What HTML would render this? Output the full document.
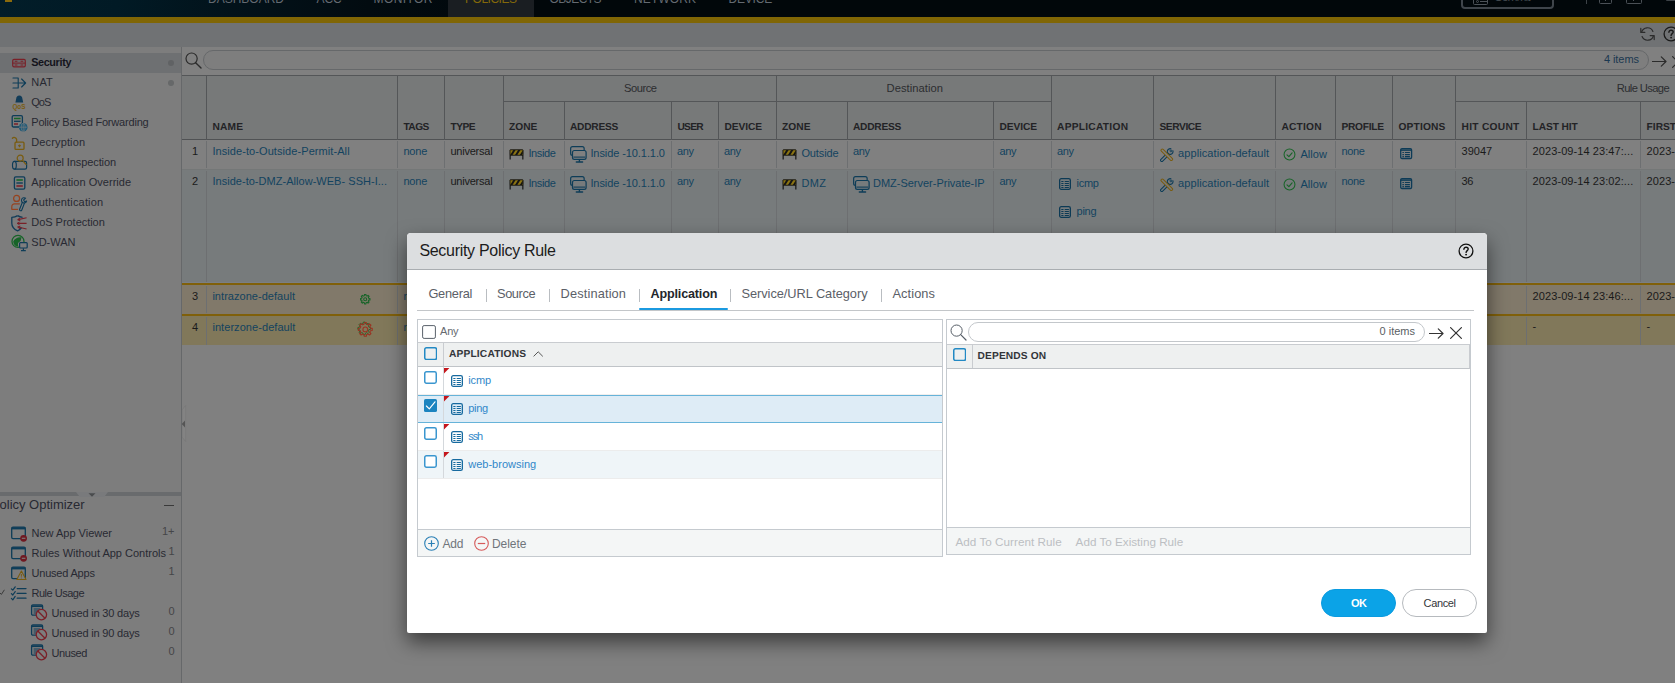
<!DOCTYPE html>
<html><head><meta charset="utf-8"><title>Security Policy Rule</title>
<style>
html,body{margin:0;padding:0}
body{width:1675px;height:683px;overflow:hidden;position:relative;background:#808080;
font-family:"Liberation Sans",sans-serif;}
body div,body svg{position:absolute;box-sizing:border-box}
.t{white-space:nowrap}
</style></head><body>
<div style="left:0px;top:0px;width:1675px;height:17px;background:linear-gradient(100deg,#021d29 0%,#011a25 7%,#02121a 14%,#020b10 22%,#01070a 32%,#01070a 100%);"></div>
<div style="left:448px;top:0px;width:86px;height:17px;background:#1a1e22;"></div>
<div style="left:5px;top:0px;width:7px;height:2px;background:#8a6a0c;"></div>
<div class="t" style="left:208px;top:-9px;font-size:12px;line-height:16px;color:#646a71;letter-spacing:-0.002px;">DASHBOARD</div>
<div class="t" style="left:316.6px;top:-9px;font-size:12px;line-height:16px;color:#646a71;letter-spacing:-0.172px;">ACC</div>
<div class="t" style="left:373.6px;top:-9px;font-size:12px;line-height:16px;color:#646a71;letter-spacing:0.391px;">MONITOR</div>
<div class="t" style="left:465px;top:-9px;font-size:12px;line-height:16px;color:#84690a;letter-spacing:-0.48px;">POLICIES</div>
<div class="t" style="left:549.6px;top:-9px;font-size:12px;line-height:16px;color:#646a71;letter-spacing:-0.557px;">OBJECTS</div>
<div class="t" style="left:634px;top:-9px;font-size:12px;line-height:16px;color:#646a71;letter-spacing:0.109px;">NETWORK</div>
<div class="t" style="left:728.6px;top:-9px;font-size:12px;line-height:16px;color:#646a71;letter-spacing:-0.217px;">DEVICE</div>
<div style="left:1461px;top:-14px;width:93px;height:23px;border:2px solid #3f454b;border-radius:4px"></div>
<div style="left:1473px;top:-6px;width:15px;height:11px;border:1px solid #4c5258;border-radius:1.5px"></div>
<div style="left:1475.6px;top:0.2px;width:3px;height:3px;border:1px solid #4c5258;border-radius:2px"></div>
<div style="left:1479.5px;top:1.2px;width:7.5px;height:1px;background:#4c5258;"></div>
<div class="t" style="left:1494px;top:-11px;font-size:12px;line-height:16px;color:#41474d;letter-spacing:-0.969px;">Commit</div>
<div style="left:1586px;top:-8px;width:1px;height:12px;background:#3c4247;"></div>
<div style="left:1599px;top:-10px;width:13px;height:14px;border:1px solid #4a5056;border-radius:1.5px"></div>
<div style="left:1605px;top:-4px;width:1px;height:5px;background:#4a5056;"></div>
<div style="left:1626px;top:-10px;width:16px;height:14px;border:1px solid #4a5056;border-radius:1.5px"></div>
<div style="left:1633px;top:-4px;width:1px;height:5px;background:#4a5056;"></div>
<div style="left:1666px;top:-4px;width:12px;height:5px;background:#3c4247;border-radius:1px"></div>
<div style="left:0px;top:17px;width:1675px;height:6px;background:#806605;"></div>
<div style="left:0px;top:23px;width:1675px;height:24px;background:#707274;"></div>
<svg style="left:1640px;top:26.8px;" width="15" height="14" viewBox="0 0 15 14" fill="none"><path d="M1.6 5.2A6 6 0 0 1 12.9 4.4M13.4 8.8A6 6 0 0 1 2.1 9.6" stroke="#2b2b2b" stroke-width="1.2" stroke-linecap="round"/><path d="M0.8 1.4V5.4H4.8M14.2 12.6V8.6H10.2" stroke="#2b2b2b" stroke-width="1.2" stroke-linecap="round" stroke-linejoin="round"/></svg>
<svg style="left:1663.2px;top:26px;" width="16" height="16" viewBox="0 0 16 16" fill="none"><circle cx="8" cy="8" r="6.9" stroke="#1a1a1a" stroke-width="1.3"/><path d="M5.9 6.3C5.9 4.9 6.9 4.2 8.1 4.2C9.3 4.2 10.2 5 10.2 6.1C10.2 7.6 8.1 7.7 8.1 9.4" stroke="#1a1a1a" stroke-width="1.4" stroke-linecap="round"/><circle cx="8.1" cy="11.6" r="0.95" fill="#1a1a1a"/></svg>
<div style="left:0px;top:47px;width:181px;height:636px;background:#7d7d7d;"></div>
<div style="left:181px;top:47px;width:1px;height:636px;background:#66686a;"></div>
<div style="left:0px;top:53px;width:181px;height:20px;background:#6e7072;"></div>
<svg style="left:9.600000000000001px;top:53.5px;" width="18" height="18" viewBox="0 0 18 18" fill="none"><rect x="2.7" y="5.4" width="12.6" height="7.4" rx="1.3" fill="#7a2028" fill-opacity=".10" stroke="#7a2028" stroke-width="1.15"/><path d="M2.8 9.1H15.2" stroke="#7a2028" stroke-width="1"/><path d="M4.8 7.25H7.4M10.6 7.25H13.2M4.8 10.95H7.4M10.6 10.95H13.2" stroke="#7a2028" stroke-width="1.1"/></svg>
<div class="t" style="left:31.2px;top:55px;font-size:10.8px;line-height:14px;color:#14141c;font-weight:bold;letter-spacing:-0.344px;">Security</div>
<svg style="left:9.600000000000001px;top:73.5px;" width="18" height="18" viewBox="0 0 18 18" fill="none"><path d="M3 4H8.2V14H3M3 9H15.6M11.6 5L15.6 9L11.6 13" stroke="#0e3d58" stroke-width="1.15" stroke-linecap="round" stroke-linejoin="round"/></svg>
<div class="t" style="left:31.3px;top:75px;font-size:11px;line-height:14px;color:#282932;letter-spacing:0.156px;">NAT</div>
<svg style="left:9.600000000000001px;top:93.5px;" width="18" height="18" viewBox="0 0 18 18" fill="none"><path d="M9.3 1.6C7.4 1.6 6.2 3 6.2 4.8L5.4 8.6H13.2L12.4 4.8C12.4 3 11.2 1.6 9.3 1.6Z" fill="#123c58"/><text x="2.4" y="15.3" font-family="Liberation Sans" font-weight="bold" font-size="6.3" fill="#7a5c10">QoS</text></svg>
<div class="t" style="left:31.3px;top:95px;font-size:11px;line-height:14px;color:#282932;letter-spacing:-1.008px;">QoS</div>
<svg style="left:9.600000000000001px;top:113.5px;" width="18" height="18" viewBox="0 0 18 18" fill="none"><rect x="2.2" y="1.6" width="10.2" height="11.4" rx="1.3" stroke="#0e3d58" stroke-width="1.3"/><path d="M4 4.5H10.6" stroke="#176428" stroke-width="1.5"/><path d="M4 7.3H10.6" stroke="#0e3d58" stroke-width="1.3"/><path d="M4 10H8" stroke="#7a2028" stroke-width="1.5"/><circle cx="13.2" cy="13.2" r="4.3" fill="#1a5878"/><path d="M9 13.2H17.4M13.2 9V17.4" stroke="#7d7d7d" stroke-width="0.7"/><ellipse cx="13.2" cy="13.2" rx="2" ry="4.2" stroke="#7d7d7d" stroke-width="0.6"/></svg>
<div class="t" style="left:31.3px;top:115px;font-size:11px;line-height:14px;color:#282932;letter-spacing:-0.194px;">Policy Based Forwarding</div>
<svg style="left:9.600000000000001px;top:133.5px;" width="18" height="18" viewBox="0 0 18 18" fill="none"><rect x="5" y="8.2" width="9" height="7.2" rx="1" stroke="#7a5c10" stroke-width="1.3"/><path d="M6.6 8V5.4A2.5 2.5 0 0 0 2.4 4.2" stroke="#7a5c10" stroke-width="1.3" stroke-linecap="round"/><path d="M9.5 10.4V13.2M8.2 11.7H10.8" stroke="#7a5c10" stroke-width="1.2"/></svg>
<div class="t" style="left:31.3px;top:135px;font-size:11px;line-height:14px;color:#282932;letter-spacing:0.125px;">Decryption</div>
<svg style="left:9.600000000000001px;top:153.5px;" width="18" height="18" viewBox="0 0 18 18" fill="none"><path d="M4.4 7.4H15A1.6 1.6 0 0 1 16.6 9V13.6A1.6 1.6 0 0 1 15 15.2H4.4" stroke="#0e3d58" stroke-width="1.2"/><ellipse cx="4.4" cy="11.3" rx="1.9" ry="3.9" stroke="#0e3d58" stroke-width="1.2"/><circle cx="10.2" cy="4.2" r="3" stroke="#7a5c10" stroke-width="1.2"/><path d="M12.4 6.4L16 10.4" stroke="#7a5c10" stroke-width="1.3" stroke-linecap="round"/></svg>
<div class="t" style="left:31.3px;top:155px;font-size:11px;line-height:14px;color:#282932;letter-spacing:-0.102px;">Tunnel Inspection</div>
<svg style="left:9.600000000000001px;top:173.5px;" width="18" height="18" viewBox="0 0 18 18" fill="none"><rect x="4.4" y="2.8" width="10.4" height="12.4" rx="1.4" stroke="#0e3d58" stroke-width="1.3"/><path d="M6.4 6H12.8" stroke="#176428" stroke-width="1.6"/><path d="M6.4 9H12.8" stroke="#0e3d58" stroke-width="1.4"/><path d="M6.4 12H12.8" stroke="#7a2028" stroke-width="1.6"/></svg>
<div class="t" style="left:31.3px;top:175px;font-size:11px;line-height:14px;color:#282932;letter-spacing:0.039px;">Application Override</div>
<svg style="left:9.600000000000001px;top:193.5px;" width="18" height="18" viewBox="0 0 18 18" fill="none"><circle cx="6.6" cy="4.4" r="3" stroke="#96431f" stroke-width="1.2"/><path d="M1.8 15.2V12.4A2.6 2.6 0 0 1 4.4 9.8H9.4" stroke="#96431f" stroke-width="1.2" stroke-linecap="round"/><path d="M1.8 15.4H8" stroke="#96431f" stroke-width="1.2"/><path d="M15.6 4.2A2.6 2.6 0 1 0 16.6 7L14.6 7.8L13.6 6Z" stroke="#0e3d58" stroke-width="1.1" stroke-linejoin="round"/><path d="M12.4 8.2L9.6 15.2A1.1 1.1 0 0 0 11.8 16L14.5 9" stroke="#0e3d58" stroke-width="1.1"/></svg>
<div class="t" style="left:31.3px;top:195px;font-size:11px;line-height:14px;color:#282932;letter-spacing:0.16px;">Authentication</div>
<svg style="left:9.600000000000001px;top:213.5px;" width="18" height="18" viewBox="0 0 18 18" fill="none"><path d="M7.6 1.6C5.8 2.8 3.8 3.3 1.8 3.4V9.2C1.8 12.6 4.4 15.4 7.6 16.8C9.3 16 10.6 15 11.6 13.6" stroke="#123c58" stroke-width="1.3" stroke-linejoin="round"/><path d="M7.6 1.6C9.4 2.8 11 3.2 12.6 3.4" stroke="#123c58" stroke-width="1.3"/><path d="M16.6 3.8L8 5.6M16.6 9.4H7.4M16.6 15L8 13" stroke="#7a2028" stroke-width="1.1"/><path d="M10 4L7.6 5.7L10.4 6.8M9.6 8L7.2 9.4L9.6 10.8M10.4 12.2L7.6 13L10 14.8" stroke="#7a2028" stroke-width="1" stroke-linejoin="round"/></svg>
<div class="t" style="left:31.3px;top:215px;font-size:11px;line-height:14px;color:#282932;letter-spacing:-0.037px;">DoS Protection</div>
<svg style="left:9.600000000000001px;top:233.5px;" width="18" height="18" viewBox="0 0 18 18" fill="none"><circle cx="8" cy="7.4" r="6" stroke="#176428" stroke-width="1.3"/><path d="M3.2 7.6C4.6 4.6 8.6 2.6 11.8 3.6C10.4 5 11.6 6.4 10 7.4C8 8 7.4 10 8.4 12.6C5.4 12.8 3.4 10.6 3.2 7.6Z" fill="#176428"/><rect x="9.6" y="8.6" width="7.6" height="5.4" rx="0.9" fill="#7d7d7d" stroke="#0e3d58" stroke-width="1.2"/><path d="M13.4 14.2V16.2M11 16.6H15.8" stroke="#0e3d58" stroke-width="1.2"/></svg>
<div class="t" style="left:31.3px;top:235px;font-size:11px;line-height:14px;color:#282932;letter-spacing:-0.001px;">SD-WAN</div>
<div style="left:168px;top:59.5px;width:6px;height:6px;background:#606264;border-radius:3px"></div>
<div style="left:168px;top:79.5px;width:6px;height:6px;background:#666869;border-radius:3px"></div>
<div style="left:0px;top:492px;width:181px;height:4px;background:#696b6d;"></div>
<div style="left:76px;top:492px;width:32px;height:5px;background:#797a7c;clip-path:polygon(0 0,100% 0,88% 100%,12% 100%)"></div>
<svg style="left:88px;top:492.5px;" width="8" height="4" viewBox="0 0 8 4" fill="none"><path d="M0.5 0.3H7.5L4 3.8Z" fill="#4a4c4e"/></svg>
<div class="t" style="left:-0.4px;top:496px;font-size:13px;line-height:17px;color:#282932;letter-spacing:-0.018px;">olicy Optimizer</div>
<div style="left:164px;top:505px;width:10px;height:1px;background:#3a3a3a;"></div>
<svg style="left:9.3px;top:524px;" width="18" height="18" viewBox="0 0 18 18" fill="none"><rect x="2.7" y="3.2" width="13.6" height="11.4" rx="1.3" stroke="#0e3d58" stroke-width="1.3"/><path d="M2.7 4.3H16.3" stroke="#0e3d58" stroke-width="2.2"/><circle cx="14.6" cy="14.3" r="3.4" fill="#701821"/><path d="M12.8 14.3H16.4" stroke="#7d7d7d" stroke-width="1.1"/></svg>
<div class="t" style="left:31.5px;top:526px;font-size:11px;line-height:14px;color:#282932;letter-spacing:-0.001px;">New App Viewer</div>
<div class="t" style="right:1500.5px;top:524px;font-size:11px;line-height:14px;color:#454548;">1+</div>
<svg style="left:9.3px;top:544px;" width="18" height="18" viewBox="0 0 18 18" fill="none"><rect x="2.7" y="3.2" width="13.6" height="11.4" rx="1.3" stroke="#0e3d58" stroke-width="1.3"/><path d="M2.7 4.3H16.3" stroke="#0e3d58" stroke-width="2.2"/><circle cx="14.6" cy="14.3" r="3.4" fill="#701821"/><path d="M12.8 14.3H16.4" stroke="#7d7d7d" stroke-width="1.1"/></svg>
<div class="t" style="left:31.5px;top:546px;font-size:11px;line-height:14px;color:#282932;letter-spacing:-0.001px;">Rules Without App Controls</div>
<div class="t" style="right:1500.5px;top:544px;font-size:11px;line-height:14px;color:#454548;">1</div>
<svg style="left:9.3px;top:564px;" width="18" height="18" viewBox="0 0 18 18" fill="none"><rect x="2.7" y="3.2" width="13.6" height="11.4" rx="1.3" stroke="#0e3d58" stroke-width="1.3"/><path d="M2.7 4.3H16.3" stroke="#0e3d58" stroke-width="2.2"/><path d="M12.4 7L17 15.5H7.8Z" fill="#7d7d7d" stroke="#7a5c10" stroke-width="1.05" stroke-linejoin="round"/><path d="M12.4 10V12.7M12.4 13.6V14.4" stroke="#7a5c10" stroke-width="0.95"/></svg>
<div class="t" style="left:31.5px;top:566px;font-size:11px;line-height:14px;color:#282932;letter-spacing:-0.204px;">Unused Apps</div>
<div class="t" style="right:1500.5px;top:564px;font-size:11px;line-height:14px;color:#454548;">1</div>
<svg style="left:8.8px;top:584px;" width="18" height="18" viewBox="0 0 18 18" fill="none"><path d="M8.2 4.6H17M8.2 9.4H17M8.2 14.2H17" stroke="#0e3d58" stroke-width="1.3" stroke-linecap="round"/><path d="M2.4 4.8L3.8 6.2L6.2 2.8M2.4 9.6L3.8 11L6.2 7.6M2.4 14.4L3.8 15.8L6.2 12.4" stroke="#0e3d58" stroke-width="1.2" stroke-linecap="round" stroke-linejoin="round"/></svg>
<div class="t" style="left:31.5px;top:586px;font-size:11px;line-height:14px;color:#282932;letter-spacing:-0.498px;">Rule Usage</div>
<svg style="left:30.4px;top:603px;" width="18" height="18" viewBox="0 0 18 18" fill="none"><rect x="1.6" y="1.8" width="11" height="10.4" rx="1.3" stroke="#0e3d58" stroke-width="1.3"/><path d="M1.6 3.2H12.6" stroke="#0e3d58" stroke-width="1.8"/><path d="M3.6 6H10.4M3.6 8H8.2M3.6 10H6.6" stroke="#0e3d58" stroke-width="1"/><circle cx="11.4" cy="11.6" r="5.2" fill="#7d7d7d" stroke="#7a2028" stroke-width="1.3"/><path d="M7.8 8L15 15.2" stroke="#7a2028" stroke-width="1.3"/></svg>
<div class="t" style="left:51.5px;top:606px;font-size:11px;line-height:14px;color:#282932;letter-spacing:-0.177px;">Unused in 30 days</div>
<div class="t" style="right:1500.5px;top:604px;font-size:11px;line-height:14px;color:#454548;">0</div>
<svg style="left:30.4px;top:623px;" width="18" height="18" viewBox="0 0 18 18" fill="none"><rect x="1.6" y="1.8" width="11" height="10.4" rx="1.3" stroke="#0e3d58" stroke-width="1.3"/><path d="M1.6 3.2H12.6" stroke="#0e3d58" stroke-width="1.8"/><path d="M3.6 6H10.4M3.6 8H8.2M3.6 10H6.6" stroke="#0e3d58" stroke-width="1"/><circle cx="11.4" cy="11.6" r="5.2" fill="#7d7d7d" stroke="#7a2028" stroke-width="1.3"/><path d="M7.8 8L15 15.2" stroke="#7a2028" stroke-width="1.3"/></svg>
<div class="t" style="left:51.5px;top:626px;font-size:11px;line-height:14px;color:#282932;letter-spacing:-0.177px;">Unused in 90 days</div>
<div class="t" style="right:1500.5px;top:624px;font-size:11px;line-height:14px;color:#454548;">0</div>
<svg style="left:30.4px;top:643px;" width="18" height="18" viewBox="0 0 18 18" fill="none"><rect x="1.6" y="1.8" width="11" height="10.4" rx="1.3" stroke="#0e3d58" stroke-width="1.3"/><path d="M1.6 3.2H12.6" stroke="#0e3d58" stroke-width="1.8"/><path d="M3.6 6H10.4M3.6 8H8.2M3.6 10H6.6" stroke="#0e3d58" stroke-width="1"/><circle cx="11.4" cy="11.6" r="5.2" fill="#7d7d7d" stroke="#7a2028" stroke-width="1.3"/><path d="M7.8 8L15 15.2" stroke="#7a2028" stroke-width="1.3"/></svg>
<div class="t" style="left:51.5px;top:646px;font-size:11px;line-height:14px;color:#282932;letter-spacing:-0.404px;">Unused</div>
<div class="t" style="right:1500.5px;top:644px;font-size:11px;line-height:14px;color:#454548;">0</div>
<svg style="left:0px;top:588.5px;" width="5" height="6" viewBox="0 0 5 6" fill="none"><path d="M0 4L1.4 5.4L4.4 0.8" stroke="#333" stroke-width="0.9"/></svg>
<svg style="left:185px;top:51.8px;" width="17" height="17" viewBox="0 0 17 17" fill="none"><circle cx="6.6" cy="6.6" r="5.6" stroke="#2b2b2b" stroke-width="1.2"/><path d="M10.7 10.7L16 16" stroke="#2b2b2b" stroke-width="1.4" stroke-linecap="round"/></svg>
<div style="left:203px;top:50px;width:1446px;height:20px;background:#7e7e7e;border:1px solid #66686a;border-radius:10px"></div>
<div class="t" style="left:1603.9px;top:52px;font-size:11px;line-height:14px;color:#1b3850;letter-spacing:-0.061px;">4 items</div>
<svg style="left:1651.5px;top:56px;" width="15" height="11" viewBox="0 0 15 11" fill="none"><path d="M0.5 5.5H14M9.3 0.8L14 5.5L9.3 10.2" stroke="#2b2b2b" stroke-width="1.2" stroke-linecap="round" stroke-linejoin="round"/></svg>
<svg style="left:1671.6px;top:55.6px;" width="12" height="12" viewBox="0 0 12 12" fill="none"><path d="M0.6 0.6L11.4 11.4M11.4 0.6L0.6 11.4" stroke="#2b2b2b" stroke-width="1.2" stroke-linecap="round"/></svg>
<div style="left:182px;top:75px;width:1493px;height:65px;background:#777979;"></div>
<div style="left:182px;top:75px;width:1493px;height:1px;background:#545658;"></div>
<div style="left:182px;top:139px;width:1493px;height:1px;background:#505254;"></div>
<div style="left:206px;top:75px;width:1px;height:65px;background:#545658;"></div>
<div style="left:397px;top:75px;width:1px;height:65px;background:#545658;"></div>
<div style="left:444px;top:75px;width:1px;height:65px;background:#545658;"></div>
<div style="left:503px;top:75px;width:1px;height:65px;background:#545658;"></div>
<div style="left:776px;top:75px;width:1px;height:65px;background:#545658;"></div>
<div style="left:1051px;top:75px;width:1px;height:65px;background:#545658;"></div>
<div style="left:1153px;top:75px;width:1px;height:65px;background:#545658;"></div>
<div style="left:1275px;top:75px;width:1px;height:65px;background:#545658;"></div>
<div style="left:1335px;top:75px;width:1px;height:65px;background:#545658;"></div>
<div style="left:1392px;top:75px;width:1px;height:65px;background:#545658;"></div>
<div style="left:1455px;top:75px;width:1px;height:65px;background:#545658;"></div>
<div style="left:564px;top:101px;width:1px;height:39px;background:#545658;"></div>
<div style="left:671px;top:101px;width:1px;height:39px;background:#545658;"></div>
<div style="left:718px;top:101px;width:1px;height:39px;background:#545658;"></div>
<div style="left:847px;top:101px;width:1px;height:39px;background:#545658;"></div>
<div style="left:993px;top:101px;width:1px;height:39px;background:#545658;"></div>
<div style="left:1526px;top:101px;width:1px;height:39px;background:#545658;"></div>
<div style="left:1640px;top:101px;width:1px;height:39px;background:#545658;"></div>
<div style="left:503px;top:101px;width:273px;height:1px;background:#545658;"></div>
<div style="left:776px;top:101px;width:275px;height:1px;background:#545658;"></div>
<div style="left:1455px;top:101px;width:220px;height:1px;background:#545658;"></div>
<div class="t" style="left:624px;top:81px;font-size:11.2px;line-height:15px;color:#2c2d30;letter-spacing:-0.491px;">Source</div>
<div class="t" style="left:886.6px;top:81px;font-size:11.2px;line-height:15px;color:#2c2d30;letter-spacing:0.042px;">Destination</div>
<div class="t" style="left:1616.7px;top:81px;font-size:11.2px;line-height:15px;color:#2c2d30;letter-spacing:-0.608px;">Rule Usage</div>
<div class="t" style="left:212.4px;top:121px;font-size:10.2px;line-height:13px;color:#232326;font-weight:bold;letter-spacing:0.2px;text-rendering:geometricPrecision;">NAME</div>
<div class="t" style="left:403.4px;top:121px;font-size:10.2px;line-height:13px;color:#232326;font-weight:bold;letter-spacing:-0.516px;text-rendering:geometricPrecision;">TAGS</div>
<div class="t" style="left:450.4px;top:121px;font-size:10.2px;line-height:13px;color:#232326;font-weight:bold;letter-spacing:-0.47px;text-rendering:geometricPrecision;">TYPE</div>
<div class="t" style="left:509px;top:121px;font-size:10.2px;line-height:13px;color:#232326;font-weight:bold;letter-spacing:0.029px;text-rendering:geometricPrecision;">ZONE</div>
<div class="t" style="left:570px;top:121px;font-size:10.2px;line-height:13px;color:#232326;font-weight:bold;letter-spacing:-0.238px;text-rendering:geometricPrecision;">ADDRESS</div>
<div class="t" style="left:677.4px;top:121px;font-size:10.2px;line-height:13px;color:#232326;font-weight:bold;letter-spacing:-0.704px;text-rendering:geometricPrecision;">USER</div>
<div class="t" style="left:724.4px;top:121px;font-size:10.2px;line-height:13px;color:#232326;font-weight:bold;letter-spacing:-0.067px;text-rendering:geometricPrecision;">DEVICE</div>
<div class="t" style="left:782px;top:121px;font-size:10.2px;line-height:13px;color:#232326;font-weight:bold;letter-spacing:0.096px;text-rendering:geometricPrecision;">ZONE</div>
<div class="t" style="left:853px;top:121px;font-size:10.2px;line-height:13px;color:#232326;font-weight:bold;letter-spacing:-0.238px;text-rendering:geometricPrecision;">ADDRESS</div>
<div class="t" style="left:999.4px;top:121px;font-size:10.2px;line-height:13px;color:#232326;font-weight:bold;letter-spacing:-0.067px;text-rendering:geometricPrecision;">DEVICE</div>
<div class="t" style="left:1057px;top:121px;font-size:10.2px;line-height:13px;color:#232326;font-weight:bold;letter-spacing:0.27px;text-rendering:geometricPrecision;">APPLICATION</div>
<div class="t" style="left:1159.4px;top:121px;font-size:10.2px;line-height:13px;color:#232326;font-weight:bold;letter-spacing:-0.391px;text-rendering:geometricPrecision;">SERVICE</div>
<div class="t" style="left:1281.4px;top:121px;font-size:10.2px;line-height:13px;color:#232326;font-weight:bold;letter-spacing:0.228px;text-rendering:geometricPrecision;">ACTION</div>
<div class="t" style="left:1341.4px;top:121px;font-size:10.2px;line-height:13px;color:#232326;font-weight:bold;letter-spacing:-0.259px;text-rendering:geometricPrecision;">PROFILE</div>
<div class="t" style="left:1398.4px;top:121px;font-size:10.2px;line-height:13px;color:#232326;font-weight:bold;letter-spacing:0.19px;text-rendering:geometricPrecision;">OPTIONS</div>
<div class="t" style="left:1461.5px;top:121px;font-size:10.2px;line-height:13px;color:#232326;font-weight:bold;letter-spacing:0.291px;text-rendering:geometricPrecision;">HIT COUNT</div>
<div class="t" style="left:1532.6px;top:121px;font-size:10.2px;line-height:13px;color:#232326;font-weight:bold;letter-spacing:-0.092px;text-rendering:geometricPrecision;">LAST HIT</div>
<div class="t" style="left:1646.6px;top:121px;font-size:10.2px;line-height:13px;color:#232326;font-weight:bold;letter-spacing:0.016px;text-rendering:geometricPrecision;">FIRST</div>
<div style="left:182px;top:169px;width:1493px;height:114px;background:#777b7c;"></div>
<div style="left:182px;top:169px;width:1493px;height:1px;background:#747777;"></div>
<div style="left:182px;top:282px;width:1493px;height:1px;background:#7b7f84;"></div>
<div style="left:182px;top:283px;width:1493px;height:2px;background:#80600a;"></div>
<div style="left:182px;top:285px;width:1493px;height:29px;background:#81796a;"></div>
<div style="left:182px;top:314px;width:1493px;height:2px;background:#80600a;"></div>
<div style="left:182px;top:316px;width:1493px;height:29px;background:#81785a;"></div>
<div style="left:206px;top:141px;width:1px;height:27px;background:#6d6f71;"></div>
<div style="left:206px;top:171px;width:1px;height:111px;background:#6d6f71;"></div>
<div style="left:206px;top:286px;width:1px;height:27px;background:#6d6f71;"></div>
<div style="left:206px;top:317px;width:1px;height:28px;background:#6d6f71;"></div>
<div style="left:397px;top:141px;width:1px;height:27px;background:#6d6f71;"></div>
<div style="left:397px;top:171px;width:1px;height:111px;background:#6d6f71;"></div>
<div style="left:397px;top:286px;width:1px;height:27px;background:#6d6f71;"></div>
<div style="left:397px;top:317px;width:1px;height:28px;background:#6d6f71;"></div>
<div style="left:444px;top:141px;width:1px;height:27px;background:#6d6f71;"></div>
<div style="left:444px;top:171px;width:1px;height:111px;background:#6d6f71;"></div>
<div style="left:444px;top:286px;width:1px;height:27px;background:#6d6f71;"></div>
<div style="left:444px;top:317px;width:1px;height:28px;background:#6d6f71;"></div>
<div style="left:503px;top:141px;width:1px;height:27px;background:#6d6f71;"></div>
<div style="left:503px;top:171px;width:1px;height:111px;background:#6d6f71;"></div>
<div style="left:503px;top:286px;width:1px;height:27px;background:#6d6f71;"></div>
<div style="left:503px;top:317px;width:1px;height:28px;background:#6d6f71;"></div>
<div style="left:776px;top:141px;width:1px;height:27px;background:#6d6f71;"></div>
<div style="left:776px;top:171px;width:1px;height:111px;background:#6d6f71;"></div>
<div style="left:776px;top:286px;width:1px;height:27px;background:#6d6f71;"></div>
<div style="left:776px;top:317px;width:1px;height:28px;background:#6d6f71;"></div>
<div style="left:1051px;top:141px;width:1px;height:27px;background:#6d6f71;"></div>
<div style="left:1051px;top:171px;width:1px;height:111px;background:#6d6f71;"></div>
<div style="left:1051px;top:286px;width:1px;height:27px;background:#6d6f71;"></div>
<div style="left:1051px;top:317px;width:1px;height:28px;background:#6d6f71;"></div>
<div style="left:1153px;top:141px;width:1px;height:27px;background:#6d6f71;"></div>
<div style="left:1153px;top:171px;width:1px;height:111px;background:#6d6f71;"></div>
<div style="left:1153px;top:286px;width:1px;height:27px;background:#6d6f71;"></div>
<div style="left:1153px;top:317px;width:1px;height:28px;background:#6d6f71;"></div>
<div style="left:1275px;top:141px;width:1px;height:27px;background:#6d6f71;"></div>
<div style="left:1275px;top:171px;width:1px;height:111px;background:#6d6f71;"></div>
<div style="left:1275px;top:286px;width:1px;height:27px;background:#6d6f71;"></div>
<div style="left:1275px;top:317px;width:1px;height:28px;background:#6d6f71;"></div>
<div style="left:1335px;top:141px;width:1px;height:27px;background:#6d6f71;"></div>
<div style="left:1335px;top:171px;width:1px;height:111px;background:#6d6f71;"></div>
<div style="left:1335px;top:286px;width:1px;height:27px;background:#6d6f71;"></div>
<div style="left:1335px;top:317px;width:1px;height:28px;background:#6d6f71;"></div>
<div style="left:1392px;top:141px;width:1px;height:27px;background:#6d6f71;"></div>
<div style="left:1392px;top:171px;width:1px;height:111px;background:#6d6f71;"></div>
<div style="left:1392px;top:286px;width:1px;height:27px;background:#6d6f71;"></div>
<div style="left:1392px;top:317px;width:1px;height:28px;background:#6d6f71;"></div>
<div style="left:1455px;top:141px;width:1px;height:27px;background:#6d6f71;"></div>
<div style="left:1455px;top:171px;width:1px;height:111px;background:#6d6f71;"></div>
<div style="left:1455px;top:286px;width:1px;height:27px;background:#6d6f71;"></div>
<div style="left:1455px;top:317px;width:1px;height:28px;background:#6d6f71;"></div>
<div style="left:564px;top:141px;width:1px;height:27px;background:#6d6f71;"></div>
<div style="left:564px;top:171px;width:1px;height:111px;background:#6d6f71;"></div>
<div style="left:564px;top:286px;width:1px;height:27px;background:#6d6f71;"></div>
<div style="left:564px;top:317px;width:1px;height:28px;background:#6d6f71;"></div>
<div style="left:671px;top:141px;width:1px;height:27px;background:#6d6f71;"></div>
<div style="left:671px;top:171px;width:1px;height:111px;background:#6d6f71;"></div>
<div style="left:671px;top:286px;width:1px;height:27px;background:#6d6f71;"></div>
<div style="left:671px;top:317px;width:1px;height:28px;background:#6d6f71;"></div>
<div style="left:718px;top:141px;width:1px;height:27px;background:#6d6f71;"></div>
<div style="left:718px;top:171px;width:1px;height:111px;background:#6d6f71;"></div>
<div style="left:718px;top:286px;width:1px;height:27px;background:#6d6f71;"></div>
<div style="left:718px;top:317px;width:1px;height:28px;background:#6d6f71;"></div>
<div style="left:847px;top:141px;width:1px;height:27px;background:#6d6f71;"></div>
<div style="left:847px;top:171px;width:1px;height:111px;background:#6d6f71;"></div>
<div style="left:847px;top:286px;width:1px;height:27px;background:#6d6f71;"></div>
<div style="left:847px;top:317px;width:1px;height:28px;background:#6d6f71;"></div>
<div style="left:993px;top:141px;width:1px;height:27px;background:#6d6f71;"></div>
<div style="left:993px;top:171px;width:1px;height:111px;background:#6d6f71;"></div>
<div style="left:993px;top:286px;width:1px;height:27px;background:#6d6f71;"></div>
<div style="left:993px;top:317px;width:1px;height:28px;background:#6d6f71;"></div>
<div style="left:1526px;top:141px;width:1px;height:27px;background:#6d6f71;"></div>
<div style="left:1526px;top:171px;width:1px;height:111px;background:#6d6f71;"></div>
<div style="left:1526px;top:286px;width:1px;height:27px;background:#6d6f71;"></div>
<div style="left:1526px;top:317px;width:1px;height:28px;background:#6d6f71;"></div>
<div style="left:1640px;top:141px;width:1px;height:27px;background:#6d6f71;"></div>
<div style="left:1640px;top:171px;width:1px;height:111px;background:#6d6f71;"></div>
<div style="left:1640px;top:286px;width:1px;height:27px;background:#6d6f71;"></div>
<div style="left:1640px;top:317px;width:1px;height:28px;background:#6d6f71;"></div>
<div class="t" style="left:192px;top:144px;font-size:11px;line-height:14px;color:#1a1a1a;">1</div>
<div class="t" style="left:212.4px;top:144px;font-size:11px;line-height:14px;color:#13435f;letter-spacing:0.078px;">Inside-to-Outside-Permit-All</div>
<div class="t" style="left:403.4px;top:144px;font-size:11px;line-height:14px;color:#13435f;letter-spacing:-0.161px;">none</div>
<div class="t" style="left:450.4px;top:144px;font-size:11px;line-height:14px;color:#1a1a1a;letter-spacing:-0.229px;">universal</div>
<svg style="left:509.4px;top:148.6px;" width="15" height="11" viewBox="0 0 15 11" fill="none"><rect x="0.95" y="0.75" width="13.1" height="5.5" rx="0.5" fill="#8a7312" stroke="#121212" stroke-width="0.9"/><path d="M1.2 6L4.3 1H6.6L3.5 6ZM6 6L9.1 1H11.4L8.3 6ZM10.8 6L13.8 1.3V4.6L13 6Z" fill="#141414"/><path d="M1.15 6V10.6M13.85 6V10.6" stroke="#121212" stroke-width="1.15"/></svg>
<div class="t" style="left:528.4px;top:146px;font-size:11px;line-height:14px;color:#13435f;letter-spacing:-0.352px;">Inside</div>
<div class="t" style="left:590.4px;top:146px;font-size:11px;line-height:14px;color:#13435f;letter-spacing:-0.083px;">Inside -10.1.1.0</div>
<div class="t" style="left:677px;top:144px;font-size:11px;line-height:14px;color:#13435f;letter-spacing:-0.375px;">any</div>
<div class="t" style="left:724px;top:144px;font-size:11px;line-height:14px;color:#13435f;letter-spacing:-0.375px;">any</div>
<svg style="left:782.4px;top:148.6px;" width="15" height="11" viewBox="0 0 15 11" fill="none"><rect x="0.95" y="0.75" width="13.1" height="5.5" rx="0.5" fill="#8a7312" stroke="#121212" stroke-width="0.9"/><path d="M1.2 6L4.3 1H6.6L3.5 6ZM6 6L9.1 1H11.4L8.3 6ZM10.8 6L13.8 1.3V4.6L13 6Z" fill="#141414"/><path d="M1.15 6V10.6M13.85 6V10.6" stroke="#121212" stroke-width="1.15"/></svg>
<div class="t" style="left:999.4px;top:144px;font-size:11px;line-height:14px;color:#13435f;letter-spacing:-0.375px;">any</div>
<svg style="left:1159.7px;top:147.7px;" width="14" height="14" viewBox="0 0 14 14" fill="none"><rect x="-5.3" y="-1.25" width="10.6" height="2.5" rx="0.9" transform="translate(4.7 9.3) rotate(-45)" stroke="#0e3d58" stroke-width="1.05"/><path d="M12.9 2.7A2.85 2.85 0 1 1 10.9 0.75" stroke="#0e3d58" stroke-width="1.1" stroke-linecap="round"/><circle cx="10.9" cy="2.9" r="0.95" stroke="#0e3d58" stroke-width="0.9"/><rect x="-7.6" y="-1.3" width="15.2" height="2.6" rx="1.2" transform="translate(6.8 6.8) rotate(45)" fill="#808080" stroke="#7a5c10" stroke-width="1.05"/></svg>
<div class="t" style="left:1178px;top:146px;font-size:11px;line-height:14px;color:#13435f;letter-spacing:0.095px;">application-default</div>
<svg style="left:1283px;top:147.79999999999998px;" width="13" height="13" viewBox="0 0 13 13" fill="none"><circle cx="6.5" cy="6.5" r="5.45" stroke="#176428" stroke-width="1.05"/><path d="M4 6.8L5.9 8.6L9.1 4.8" stroke="#176428" stroke-width="1.1" stroke-linecap="round" stroke-linejoin="round"/></svg>
<div class="t" style="left:1300.4px;top:147px;font-size:11px;line-height:14px;color:#13435f;letter-spacing:0.076px;">Allow</div>
<div class="t" style="left:1341.4px;top:144px;font-size:11px;line-height:14px;color:#13435f;letter-spacing:-0.295px;">none</div>
<svg style="left:1399.8px;top:148.2px;" width="13" height="12" viewBox="0 0 13 12" fill="none"><rect x="0.7" y="0.7" width="10.9" height="9.8" rx="1.3" stroke="#0d3b57" stroke-width="1.3"/><path d="M0.7 2.1H11.6" stroke="#0d3b57" stroke-width="1.5"/><path d="M2.4 4.5H3.9M4.9 4.5H9.9M2.4 6.6H3.9M4.9 6.6H9.9M2.4 8.7H3.9M4.9 8.7H9.9" stroke="#0d3b57" stroke-width="1.2"/></svg>
<svg style="left:569.6px;top:146px;" width="17" height="17" viewBox="0 0 17 17" fill="none"><rect x="0.65" y="0.65" width="13.5" height="8.7" rx="1.9" stroke="#0e3d58" stroke-width="1.2"/><rect x="2.5" y="4.5" width="13.6" height="8.9" rx="1.9" fill="#808080" stroke="#0e3d58" stroke-width="1.2"/><path d="M3.4 11.1H15.2" stroke="#0e3d58" stroke-width="1.1"/><path d="M9.4 13.6V15.6M6.3 16H12.6" stroke="#0e3d58" stroke-width="1.35" stroke-linecap="round"/></svg>
<div class="t" style="left:801.4px;top:146px;font-size:11px;line-height:14px;color:#13435f;letter-spacing:-0.12px;">Outside</div>
<div class="t" style="left:853px;top:144px;font-size:11px;line-height:14px;color:#13435f;letter-spacing:-0.375px;">any</div>
<div class="t" style="left:1057px;top:144px;font-size:11px;line-height:14px;color:#13435f;letter-spacing:-0.375px;">any</div>
<div class="t" style="left:1461.5px;top:144px;font-size:11px;line-height:14px;color:#1a1a1a;letter-spacing:0.027px;">39047</div>
<div class="t" style="left:1532.6px;top:144px;font-size:11px;line-height:14px;color:#1a1a1a;letter-spacing:0.08px;">2023-09-14 23:47:...</div>
<div class="t" style="left:1646.6px;top:144px;font-size:11px;line-height:14px;color:#1a1a1a;letter-spacing:0.065px;">2023-</div>
<div class="t" style="left:192px;top:174px;font-size:11px;line-height:14px;color:#1a1a1a;">2</div>
<div class="t" style="left:212.4px;top:174px;font-size:11px;line-height:14px;color:#13435f;letter-spacing:0.032px;">Inside-to-DMZ-Allow-WEB- SSH-I...</div>
<div class="t" style="left:403.4px;top:174px;font-size:11px;line-height:14px;color:#13435f;letter-spacing:-0.161px;">none</div>
<div class="t" style="left:450.4px;top:174px;font-size:11px;line-height:14px;color:#1a1a1a;letter-spacing:-0.229px;">universal</div>
<svg style="left:509.4px;top:178.6px;" width="15" height="11" viewBox="0 0 15 11" fill="none"><rect x="0.95" y="0.75" width="13.1" height="5.5" rx="0.5" fill="#8a7312" stroke="#121212" stroke-width="0.9"/><path d="M1.2 6L4.3 1H6.6L3.5 6ZM6 6L9.1 1H11.4L8.3 6ZM10.8 6L13.8 1.3V4.6L13 6Z" fill="#141414"/><path d="M1.15 6V10.6M13.85 6V10.6" stroke="#121212" stroke-width="1.15"/></svg>
<div class="t" style="left:528.4px;top:176px;font-size:11px;line-height:14px;color:#13435f;letter-spacing:-0.352px;">Inside</div>
<div class="t" style="left:590.4px;top:176px;font-size:11px;line-height:14px;color:#13435f;letter-spacing:-0.083px;">Inside -10.1.1.0</div>
<div class="t" style="left:677px;top:174px;font-size:11px;line-height:14px;color:#13435f;letter-spacing:-0.375px;">any</div>
<div class="t" style="left:724px;top:174px;font-size:11px;line-height:14px;color:#13435f;letter-spacing:-0.375px;">any</div>
<svg style="left:782.4px;top:178.6px;" width="15" height="11" viewBox="0 0 15 11" fill="none"><rect x="0.95" y="0.75" width="13.1" height="5.5" rx="0.5" fill="#8a7312" stroke="#121212" stroke-width="0.9"/><path d="M1.2 6L4.3 1H6.6L3.5 6ZM6 6L9.1 1H11.4L8.3 6ZM10.8 6L13.8 1.3V4.6L13 6Z" fill="#141414"/><path d="M1.15 6V10.6M13.85 6V10.6" stroke="#121212" stroke-width="1.15"/></svg>
<div class="t" style="left:999.4px;top:174px;font-size:11px;line-height:14px;color:#13435f;letter-spacing:-0.375px;">any</div>
<svg style="left:1159.7px;top:177.7px;" width="14" height="14" viewBox="0 0 14 14" fill="none"><rect x="-5.3" y="-1.25" width="10.6" height="2.5" rx="0.9" transform="translate(4.7 9.3) rotate(-45)" stroke="#0e3d58" stroke-width="1.05"/><path d="M12.9 2.7A2.85 2.85 0 1 1 10.9 0.75" stroke="#0e3d58" stroke-width="1.1" stroke-linecap="round"/><circle cx="10.9" cy="2.9" r="0.95" stroke="#0e3d58" stroke-width="0.9"/><rect x="-7.6" y="-1.3" width="15.2" height="2.6" rx="1.2" transform="translate(6.8 6.8) rotate(45)" fill="#777b7c" stroke="#7a5c10" stroke-width="1.05"/></svg>
<div class="t" style="left:1178px;top:176px;font-size:11px;line-height:14px;color:#13435f;letter-spacing:0.095px;">application-default</div>
<svg style="left:1283px;top:177.79999999999998px;" width="13" height="13" viewBox="0 0 13 13" fill="none"><circle cx="6.5" cy="6.5" r="5.45" stroke="#176428" stroke-width="1.05"/><path d="M4 6.8L5.9 8.6L9.1 4.8" stroke="#176428" stroke-width="1.1" stroke-linecap="round" stroke-linejoin="round"/></svg>
<div class="t" style="left:1300.4px;top:177px;font-size:11px;line-height:14px;color:#13435f;letter-spacing:0.076px;">Allow</div>
<div class="t" style="left:1341.4px;top:174px;font-size:11px;line-height:14px;color:#13435f;letter-spacing:-0.295px;">none</div>
<svg style="left:1399.8px;top:178.2px;" width="13" height="12" viewBox="0 0 13 12" fill="none"><rect x="0.7" y="0.7" width="10.9" height="9.8" rx="1.3" stroke="#0d3b57" stroke-width="1.3"/><path d="M0.7 2.1H11.6" stroke="#0d3b57" stroke-width="1.5"/><path d="M2.4 4.5H3.9M4.9 4.5H9.9M2.4 6.6H3.9M4.9 6.6H9.9M2.4 8.7H3.9M4.9 8.7H9.9" stroke="#0d3b57" stroke-width="1.2"/></svg>
<svg style="left:569.6px;top:176px;" width="17" height="17" viewBox="0 0 17 17" fill="none"><rect x="0.65" y="0.65" width="13.5" height="8.7" rx="1.9" stroke="#0e3d58" stroke-width="1.2"/><rect x="2.5" y="4.5" width="13.6" height="8.9" rx="1.9" fill="#777b7c" stroke="#0e3d58" stroke-width="1.2"/><path d="M3.4 11.1H15.2" stroke="#0e3d58" stroke-width="1.1"/><path d="M9.4 13.6V15.6M6.3 16H12.6" stroke="#0e3d58" stroke-width="1.35" stroke-linecap="round"/></svg>
<div class="t" style="left:801.4px;top:176px;font-size:11px;line-height:14px;color:#13435f;letter-spacing:0.386px;">DMZ</div>
<svg style="left:852.6px;top:176px;" width="17" height="17" viewBox="0 0 17 17" fill="none"><rect x="0.65" y="0.65" width="13.5" height="8.7" rx="1.9" stroke="#0e3d58" stroke-width="1.2"/><rect x="2.5" y="4.5" width="13.6" height="8.9" rx="1.9" fill="#777b7c" stroke="#0e3d58" stroke-width="1.2"/><path d="M3.4 11.1H15.2" stroke="#0e3d58" stroke-width="1.1"/><path d="M9.4 13.6V15.6M6.3 16H12.6" stroke="#0e3d58" stroke-width="1.35" stroke-linecap="round"/></svg>
<div class="t" style="left:873px;top:176px;font-size:11px;line-height:14px;color:#13435f;letter-spacing:-0.012px;">DMZ-Server-Private-IP</div>
<svg style="left:1059px;top:178px;" width="13" height="13" viewBox="0 0 13 13" fill="none"><rect x="0.65" y="0.65" width="10.7" height="10.7" rx="1.6" stroke="#0c3a55" stroke-width="1.3"/><path d="M2.3 3.5H4.5M5.7 3.5H9.9M2.3 5.5H4.5M5.7 5.5H9.9M2.3 7.5H4.5M5.7 7.5H9.9M2.3 9.5H4.5M5.7 9.5H9.9" stroke="#0c3a55" stroke-width="1"/></svg>
<div class="t" style="left:1076.6px;top:176px;font-size:11px;line-height:14px;color:#13435f;letter-spacing:-0.278px;">icmp</div>
<svg style="left:1059px;top:206px;" width="13" height="13" viewBox="0 0 13 13" fill="none"><rect x="0.65" y="0.65" width="10.7" height="10.7" rx="1.6" stroke="#0c3a55" stroke-width="1.3"/><path d="M2.3 3.5H4.5M5.7 3.5H9.9M2.3 5.5H4.5M5.7 5.5H9.9M2.3 7.5H4.5M5.7 7.5H9.9M2.3 9.5H4.5M5.7 9.5H9.9" stroke="#0c3a55" stroke-width="1"/></svg>
<div class="t" style="left:1076.6px;top:204px;font-size:11px;line-height:14px;color:#13435f;letter-spacing:-0.266px;">ping</div>
<div class="t" style="left:1461.5px;top:174px;font-size:11px;line-height:14px;color:#1a1a1a;letter-spacing:-0.25px;">36</div>
<div class="t" style="left:1532.6px;top:174px;font-size:11px;line-height:14px;color:#1a1a1a;letter-spacing:0.08px;">2023-09-14 23:02:...</div>
<div class="t" style="left:1646.6px;top:174px;font-size:11px;line-height:14px;color:#1a1a1a;letter-spacing:0.065px;">2023-</div>
<div class="t" style="left:192px;top:289px;font-size:11px;line-height:14px;color:#1a1a1a;">3</div>
<div class="t" style="left:212.4px;top:289px;font-size:11px;line-height:14px;color:#13435f;letter-spacing:0.04px;">intrazone-default</div>
<svg style="left:359.6px;top:293.6px;" width="11" height="11" viewBox="0 0 11 11" fill="none"><path d="M9.95 4.49L9.95 5.91L8.69 6.08L8.29 7.04L9.06 8.05L8.05 9.06L7.04 8.29L6.08 8.69L5.91 9.95L4.49 9.95L4.32 8.69L3.36 8.29L2.35 9.06L1.34 8.05L2.11 7.04L1.71 6.08L0.45 5.91L0.45 4.49L1.71 4.32L2.11 3.36L1.34 2.35L2.35 1.34L3.36 2.11L4.32 1.71L4.49 0.45L5.91 0.45L6.08 1.71L7.04 2.11L8.05 1.34L9.06 2.35L8.29 3.36L8.69 4.32Z" stroke="#176428" stroke-width="1.1" stroke-linejoin="round"/><circle cx="5.2" cy="5.2" r="1.5" stroke="#176428" stroke-width="1.1"/></svg>
<div class="t" style="left:403.4px;top:289px;font-size:11px;line-height:14px;color:#13435f;letter-spacing:-0.161px;">none</div>
<div class="t" style="left:1532.6px;top:289px;font-size:11px;line-height:14px;color:#1a1a1a;letter-spacing:0.08px;">2023-09-14 23:46:...</div>
<div class="t" style="left:1646.6px;top:289px;font-size:11px;line-height:14px;color:#1a1a1a;letter-spacing:0.065px;">2023-</div>
<div class="t" style="left:192px;top:320px;font-size:11px;line-height:14px;color:#1a1a1a;">4</div>
<div class="t" style="left:212.4px;top:320px;font-size:11px;line-height:14px;color:#13435f;letter-spacing:0.065px;">interzone-default</div>
<svg style="left:356.6px;top:321.4px;" width="16" height="16" viewBox="0 0 16 16" fill="none"><path d="M13.53 6.45L13.53 8.35L11.95 8.60L11.41 9.91L12.35 11.21L11.01 12.55L9.71 11.61L8.40 12.15L8.15 13.73L6.25 13.73L6.00 12.15L4.69 11.61L3.39 12.55L2.05 11.21L2.99 9.91L2.45 8.60L0.87 8.35L0.87 6.45L2.45 6.20L2.99 4.89L2.05 3.59L3.39 2.25L4.69 3.19L6.00 2.65L6.25 1.07L8.15 1.07L8.40 2.65L9.71 3.19L11.01 2.25L12.35 3.59L11.41 4.89L11.95 6.20Z" stroke="#176428" stroke-width="0.9" stroke-linejoin="round" opacity="0.9"/><path d="M15.22 7.36L15.22 9.44L13.44 9.70L12.85 11.12L13.93 12.56L12.46 14.03L11.02 12.95L9.60 13.54L9.34 15.32L7.26 15.32L7.00 13.54L5.58 12.95L4.14 14.03L2.67 12.56L3.75 11.12L3.16 9.70L1.38 9.44L1.38 7.36L3.16 7.10L3.75 5.68L2.67 4.24L4.14 2.77L5.58 3.85L7.00 3.26L7.26 1.48L9.34 1.48L9.60 3.26L11.02 3.85L12.46 2.77L13.93 4.24L12.85 5.68L13.44 7.10Z" stroke="#9a3322" stroke-width="1.1" stroke-linejoin="round"/><circle cx="8.3" cy="8.4" r="2.4" stroke="#9a3322" stroke-width="1.1"/></svg>
<div class="t" style="left:403.4px;top:320px;font-size:11px;line-height:14px;color:#13435f;letter-spacing:-0.161px;">none</div>
<div class="t" style="left:1532.6px;top:319px;font-size:11px;line-height:14px;color:#1a1a1a;">-</div>
<div class="t" style="left:1646.6px;top:319px;font-size:11px;line-height:14px;color:#1a1a1a;">-</div>
<svg style="left:182px;top:405px;" width="5" height="37" viewBox="0 0 5 37" fill="none"><path d="M0 5L3.6 0.5V36.5L0 32Z" fill="#838383" stroke="#797979" stroke-width="0.8"/></svg>
<svg style="left:181px;top:419.5px;" width="5" height="8" viewBox="0 0 5 8" fill="none"><path d="M4 0.5L0.8 4L4 7.5Z" fill="#555"/></svg>
<div style="left:407px;top:233px;width:1080px;height:399.5px;background:#fff;border-radius:4px 4px 2px 2px;box-shadow:0 9px 20px rgba(0,0,0,.54)"></div>
<div style="left:407px;top:233px;width:1080px;height:36px;background:#dcdee0;border-radius:4px 4px 0 0"></div>
<div style="left:407px;top:269px;width:1080px;height:1px;background:#a9adb1;"></div>
<div class="t" style="left:419.4px;top:240px;font-size:16px;line-height:21px;color:#1b1b1b;letter-spacing:-0.299px;">Security Policy Rule</div>
<svg style="left:1457.6px;top:243.4px;" width="16" height="16" viewBox="0 0 16 16" fill="none"><circle cx="8" cy="8" r="6.9" stroke="#111" stroke-width="1.3"/><path d="M5.9 6.3C5.9 4.9 6.9 4.2 8.1 4.2C9.3 4.2 10.2 5 10.2 6.1C10.2 7.6 8.1 7.7 8.1 9.4" stroke="#111" stroke-width="1.4" stroke-linecap="round"/><circle cx="8.1" cy="11.6" r="0.95" fill="#111"/></svg>
<div class="t" style="left:428.4px;top:285px;font-size:12.8px;line-height:17px;color:#5b6067;letter-spacing:-0.255px;">General</div>
<div class="t" style="left:497px;top:285px;font-size:12.8px;line-height:17px;color:#5b6067;letter-spacing:-0.389px;">Source</div>
<div class="t" style="left:560.6px;top:285px;font-size:12.8px;line-height:17px;color:#5b6067;letter-spacing:0.137px;">Destination</div>
<div class="t" style="left:741.4px;top:285px;font-size:12.8px;line-height:17px;color:#5b6067;letter-spacing:-0.034px;">Service/URL Category</div>
<div class="t" style="left:892.4px;top:285px;font-size:12.8px;line-height:17px;color:#5b6067;letter-spacing:0.105px;">Actions</div>
<div class="t" style="left:650.6px;top:286px;font-size:12.6px;line-height:16px;color:#23262b;font-weight:bold;letter-spacing:-0.178px;">Application</div>
<div style="left:486px;top:289px;width:1px;height:13px;background:#b9bdc1;"></div>
<div style="left:549px;top:289px;width:1px;height:13px;background:#b9bdc1;"></div>
<div style="left:639px;top:289px;width:1px;height:13px;background:#b9bdc1;"></div>
<div style="left:730px;top:289px;width:1px;height:13px;background:#b9bdc1;"></div>
<div style="left:881px;top:289px;width:1px;height:13px;background:#b9bdc1;"></div>
<div style="left:417px;top:310px;width:1057px;height:1px;background:#c3c6c9;"></div>
<div style="left:639.4px;top:307.6px;width:88.2px;height:2.5px;background:#1b9ae0;border-radius:1px"></div>
<div style="left:417px;top:319px;width:526px;height:238px;background:#fff;border:1px solid #c5cacf"></div>
<svg style="left:421.8px;top:324.8px;" width="14" height="14" viewBox="0 0 14 14" fill="none"><rect x="0.6" y="0.6" width="12.8" height="12.8" rx="1.5" fill="#fff" stroke="#59616a" stroke-width="1"/></svg>
<div class="t" style="left:440px;top:324px;font-size:11px;line-height:14px;color:#666a70;letter-spacing:-0.184px;">Any</div>
<div style="left:418px;top:342px;width:524px;height:25px;background:#eef0f0;border-top:1px solid #c9ccd0;border-bottom:1px solid #c0c4c8"></div>
<div style="left:443px;top:343px;width:1px;height:23px;background:#c9ccd0;"></div>
<svg style="left:424.1px;top:346.5px;" width="13.3" height="13.3" viewBox="0 0 13.3 13.3" fill="none"><rect x="0.75" y="0.75" width="11.8" height="11.8" rx="1.7" fill="#eef0f0" stroke="#2289c4" stroke-width="1.5"/></svg>
<div class="t" style="left:449px;top:348px;font-size:10.2px;line-height:13px;color:#33353a;font-weight:bold;letter-spacing:0.173px;text-rendering:geometricPrecision;">APPLICATIONS</div>
<svg style="left:533.4px;top:350.6px;" width="11" height="6" viewBox="0 0 11 6" fill="none"><path d="M0.6 5.4L5.2 0.8L9.8 5.4" stroke="#555" stroke-width="1"/></svg>
<div style="left:418px;top:367px;width:524px;height:28px;background:#fff;"></div>
<div style="left:443px;top:367px;width:1px;height:28px;background:#d4d8dc;"></div>
<svg style="left:424.1px;top:371.1px;" width="13" height="13" viewBox="0 0 13 13" fill="none"><rect x="0.75" y="0.75" width="11.5" height="11.5" rx="1.7" fill="#fff" stroke="#3a96cf" stroke-width="1.5"/></svg>
<svg style="left:444px;top:368px;" width="6" height="6" viewBox="0 0 6 6" fill="none"><path d="M0 0H5.4L0 5.6Z" fill="#c4161c"/></svg>
<svg style="left:451px;top:375px;" width="13" height="13" viewBox="0 0 13 13" fill="none"><rect x="0.65" y="0.65" width="10.7" height="10.7" rx="1.6" stroke="#176a9f" stroke-width="1.3"/><path d="M2.3 3.5H4.5M5.7 3.5H9.9M2.3 5.5H4.5M5.7 5.5H9.9M2.3 7.5H4.5M5.7 7.5H9.9M2.3 9.5H4.5M5.7 9.5H9.9" stroke="#176a9f" stroke-width="1"/></svg>
<div class="t" style="left:468.2px;top:373px;font-size:11px;line-height:14px;color:#3187c9;letter-spacing:-0.078px;">icmp</div>
<div style="left:418px;top:395px;width:524px;height:28px;background:#deecf6;"></div>
<div style="left:443px;top:395px;width:1px;height:28px;background:#d4d8dc;"></div>
<svg style="left:424.1px;top:399.1px;" width="13" height="13" viewBox="0 0 13 13" fill="none"><rect x="0" y="0" width="13" height="13" rx="1.6" fill="#1b84c0"/><path d="M2.4 7L5.3 9.8L11 2.8" stroke="#fff" stroke-width="1.15" stroke-linecap="round" stroke-linejoin="round"/></svg>
<svg style="left:444px;top:396px;" width="6" height="6" viewBox="0 0 6 6" fill="none"><path d="M0 0H5.4L0 5.6Z" fill="#c4161c"/></svg>
<svg style="left:451px;top:403px;" width="13" height="13" viewBox="0 0 13 13" fill="none"><rect x="0.65" y="0.65" width="10.7" height="10.7" rx="1.6" stroke="#176a9f" stroke-width="1.3"/><path d="M2.3 3.5H4.5M5.7 3.5H9.9M2.3 5.5H4.5M5.7 5.5H9.9M2.3 7.5H4.5M5.7 7.5H9.9M2.3 9.5H4.5M5.7 9.5H9.9" stroke="#176a9f" stroke-width="1"/></svg>
<div class="t" style="left:468.2px;top:401px;font-size:11px;line-height:14px;color:#3187c9;letter-spacing:-0.266px;">ping</div>
<div style="left:418px;top:423px;width:524px;height:28px;background:#fff;"></div>
<div style="left:443px;top:423px;width:1px;height:28px;background:#d4d8dc;"></div>
<svg style="left:424.1px;top:427.1px;" width="13" height="13" viewBox="0 0 13 13" fill="none"><rect x="0.75" y="0.75" width="11.5" height="11.5" rx="1.7" fill="#fff" stroke="#3a96cf" stroke-width="1.5"/></svg>
<svg style="left:444px;top:424px;" width="6" height="6" viewBox="0 0 6 6" fill="none"><path d="M0 0H5.4L0 5.6Z" fill="#c4161c"/></svg>
<svg style="left:451px;top:431px;" width="13" height="13" viewBox="0 0 13 13" fill="none"><rect x="0.65" y="0.65" width="10.7" height="10.7" rx="1.6" stroke="#176a9f" stroke-width="1.3"/><path d="M2.3 3.5H4.5M5.7 3.5H9.9M2.3 5.5H4.5M5.7 5.5H9.9M2.3 7.5H4.5M5.7 7.5H9.9M2.3 9.5H4.5M5.7 9.5H9.9" stroke="#176a9f" stroke-width="1"/></svg>
<div class="t" style="left:468.2px;top:429px;font-size:11px;line-height:14px;color:#3187c9;letter-spacing:-1.062px;">ssh</div>
<div style="left:418px;top:451px;width:524px;height:28px;background:#eff5f8;"></div>
<div style="left:443px;top:451px;width:1px;height:28px;background:#d4d8dc;"></div>
<svg style="left:424.1px;top:455.1px;" width="13" height="13" viewBox="0 0 13 13" fill="none"><rect x="0.75" y="0.75" width="11.5" height="11.5" rx="1.7" fill="#fff" stroke="#3a96cf" stroke-width="1.5"/></svg>
<svg style="left:444px;top:452px;" width="6" height="6" viewBox="0 0 6 6" fill="none"><path d="M0 0H5.4L0 5.6Z" fill="#c4161c"/></svg>
<svg style="left:451px;top:459px;" width="13" height="13" viewBox="0 0 13 13" fill="none"><rect x="0.65" y="0.65" width="10.7" height="10.7" rx="1.6" stroke="#176a9f" stroke-width="1.3"/><path d="M2.3 3.5H4.5M5.7 3.5H9.9M2.3 5.5H4.5M5.7 5.5H9.9M2.3 7.5H4.5M5.7 7.5H9.9M2.3 9.5H4.5M5.7 9.5H9.9" stroke="#176a9f" stroke-width="1"/></svg>
<div class="t" style="left:468.2px;top:457px;font-size:11px;line-height:14px;color:#3187c9;letter-spacing:0.011px;">web-browsing</div>
<div style="left:418px;top:394px;width:524px;height:1px;background:#f1efee;"></div>
<div style="left:418px;top:450px;width:524px;height:1px;background:#ececec;"></div>
<div style="left:418px;top:395px;width:524px;height:1px;background:#66b3d9;"></div>
<div style="left:418px;top:422px;width:524px;height:1px;background:#66b3d9;"></div>
<div style="left:418px;top:478px;width:524px;height:1px;background:#ececec;"></div>
<div style="left:418px;top:529px;width:524px;height:27px;background:#f4f6f6;border-top:1px solid #c5cacf"></div>
<svg style="left:424px;top:536px;" width="15" height="15" viewBox="0 0 15 15" fill="none"><circle cx="7.5" cy="7.5" r="6.8" stroke="#2a7fb5" stroke-width="1.1"/><path d="M4.2 7.5H10.8M7.5 4.2V10.8" stroke="#2a7fb5" stroke-width="1.2"/></svg>
<div class="t" style="left:442.4px;top:536px;font-size:12px;line-height:16px;color:#70757b;letter-spacing:-0.18px;">Add</div>
<svg style="left:474px;top:536px;" width="15" height="15" viewBox="0 0 15 15" fill="none"><circle cx="7.5" cy="7.5" r="6.8" stroke="#d65a5a" stroke-width="1.1"/><path d="M3.8 7.5H11.2" stroke="#d65a5a" stroke-width="1.2"/></svg>
<div class="t" style="left:492px;top:536px;font-size:12px;line-height:16px;color:#70757b;letter-spacing:-0.058px;">Delete</div>
<div style="left:946px;top:319px;width:525px;height:236px;background:#fff;border:1px solid #c5cacf"></div>
<svg style="left:950px;top:323.8px;" width="17" height="17" viewBox="0 0 17 17" fill="none"><circle cx="6.6" cy="6.6" r="5.6" stroke="#565e67" stroke-width="1"/><path d="M10.7 10.7L16 16" stroke="#565e67" stroke-width="1.2" stroke-linecap="round"/></svg>
<div style="left:968px;top:322px;width:457px;height:20px;background:#fff;border:1px solid #c3c7cb;border-radius:10px"></div>
<div class="t" style="left:1379.6px;top:324px;font-size:11px;line-height:14px;color:#5a5e64;letter-spacing:-0.011px;">0 items</div>
<svg style="left:1428.6px;top:328.2px;" width="15" height="11" viewBox="0 0 15 11" fill="none"><path d="M0.5 5.5H14M9.3 0.8L14 5.5L9.3 10.2" stroke="#333" stroke-width="1.2" stroke-linecap="round" stroke-linejoin="round"/></svg>
<svg style="left:1450px;top:327.4px;" width="12" height="12" viewBox="0 0 12 12" fill="none"><path d="M0.6 0.6L11.4 11.4M11.4 0.6L0.6 11.4" stroke="#333" stroke-width="1.2" stroke-linecap="round"/></svg>
<div style="left:947px;top:344px;width:523px;height:25px;background:#eef0f0;border-top:1px solid #c9ccd0;border-bottom:1px solid #c0c4c8;border-right:1px solid #c9ccd0"></div>
<div style="left:972px;top:345px;width:1px;height:23px;background:#c9ccd0;"></div>
<svg style="left:953px;top:348px;" width="13.3" height="13.3" viewBox="0 0 13.3 13.3" fill="none"><rect x="0.75" y="0.75" width="11.8" height="11.8" rx="1.7" fill="#eef0f0" stroke="#2289c4" stroke-width="1.5"/></svg>
<div class="t" style="left:977.6px;top:350px;font-size:10.2px;line-height:13px;color:#33353a;font-weight:bold;letter-spacing:0.125px;text-rendering:geometricPrecision;">DEPENDS ON</div>
<div style="left:947px;top:527px;width:523px;height:27px;background:#f4f6f6;border-top:1px solid #c5cacf"></div>
<div class="t" style="left:955.5px;top:534px;font-size:11.7px;line-height:15px;color:#bcbfc3;letter-spacing:0.028px;">Add To Current Rule</div>
<div class="t" style="left:1075.6px;top:534px;font-size:11.7px;line-height:15px;color:#bcbfc3;letter-spacing:-0.002px;">Add To Existing Rule</div>
<div style="left:1321px;top:589px;width:75px;height:28px;background:#0ba3e7;border:1px solid #0a9be0;border-radius:14px"></div>
<div class="t" style="left:1351px;top:596px;font-size:11px;line-height:14px;color:#fff;font-weight:bold;letter-spacing:-0.5px;">OK</div>
<div style="left:1402px;top:589px;width:75px;height:28px;background:#fff;border:1px solid #b6babe;border-radius:14px"></div>
<div class="t" style="left:1423.6px;top:596px;font-size:11px;line-height:14px;color:#33363a;letter-spacing:-0.37px;">Cancel</div>
</body></html>
